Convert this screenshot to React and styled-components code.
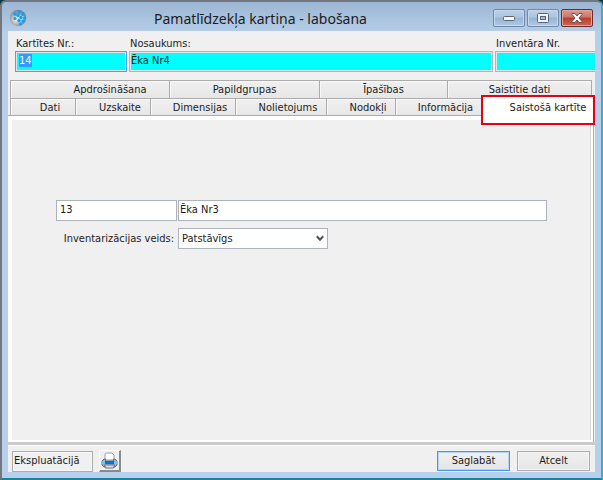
import React, { useEffect, useRef } from "react";
import styled, { createGlobalStyle } from "styled-components";

const GlobalStyle = createGlobalStyle`
  * { box-sizing: border-box; }
  body { margin: 0; background: #06363c; }
  body, input, select, button {
    font-family: "DejaVu Sans Condensed", "Noto Sans", sans-serif;
    font-size: 11px;
    line-height: 14px;
    color: #1c1c1c;
  }
`;

const Window = styled.div`
  display: flex;
  flex-direction: column;
  min-height: 100vh;
  padding: 0 6px 6px;
  background: linear-gradient(#9cb6d3, #b7cfea 32px, #b7cfea);
  border: 2px solid #737880;
  border-bottom-color: #15849c;
  border-right-color: #46a9c8;
  border-radius: 6px 6px 0 0;
`;

const TitleBar = styled.header`
  display: grid;
  grid-template-columns: 22px 1fr 104px;
  align-items: center;
  height: 29px;
  flex: none;
`;

const AppIcon = styled.svg`
  width: 18px;
  height: 18px;
  margin: 3px 0 0 1px;
`;

const Title = styled.h1`
  margin: 5px 0 0;
  font-family: "Noto Sans", sans-serif;
  font-size: 14px;
  line-height: 20px;
  font-weight: 400;
  text-align: center;
  white-space: nowrap;
`;

const WindowControls = styled.div`
  display: flex;
  gap: 2px;
  justify-content: flex-end;
  padding: 3px 2px 0 0;
`;

const ControlButton = styled.button`
  display: grid;
  place-items: center;
  width: 32px;
  height: 18px;
  padding: 0;
  border: 1px solid ${(p) => (p.$close ? "#70282c" : "#7189a6")};
  border-radius: 2px;
  background: ${(p) =>
    p.$close
      ? "linear-gradient(#dc9a8e, #cd7465 45%, #b93c28 50%, #c96b55)"
      : "linear-gradient(#bdd0e6, #adc5df 45%, #96b3d3 50%, #b0cae6)"};
  box-shadow: inset 0 0 0 1px ${(p) => (p.$close ? "#e2a79c" : "#c3d8ee")};
`;

const Client = styled.main`
  display: flex;
  flex-direction: column;
  flex: 1;
  overflow: hidden;
  background: #f0f0f0;
`;

const RecordHeader = styled.section`
  display: grid;
  grid-template-columns: 112px 1fr 100px;
  gap: 2px;
  padding: 6px 0 0 7px;
`;

const Field = styled.div`
  display: flex;
  flex-direction: column;
  label { padding-left: 1px; white-space: nowrap; }
`;

const TextInput = styled.input`
  width: 100%;
  min-width: 0;
  height: 21px;
  padding: 0 1px 2px;
  border: 1px solid #aeb3bb;
  outline: 0;
  background: #fff;
  border-radius: 0;
`;

const KeyInput = styled(TextInput)`
  background: #00ffff;
  border-color: ${(p) => (p.$active ? "#569de5" : "#b4b4b4")};
  box-shadow: inset 0 0 0 1px #e4e4e4;
  ${(p) => p.$active && "padding-left: 3px;"}
  ${(p) => p.$clipped && "border-right: 0; box-shadow: inset 1px 1px 0 #e4e4e4, inset 0 -1px 0 #e4e4e4;"}
  &::selection { background: #3399ff; color: #fff; }
`;

const Tabs = styled.nav`
  display: flex;
  flex-direction: column;
  margin: 8px 3px 0 2px;
`;

const TabRow = styled.div`
  display: grid;
  grid-template-columns: ${(p) => p.$columns};
  height: 18px;
`;

const Tab = styled.button`
  min-width: 0;
  height: 18px;
  padding: 1px 0 0 ${(p) => p.$indent || 0}px;
  border: 0;
  border-top: 1px solid #acacac;
  border-left: 1px solid #acacac;
  background: linear-gradient(#f0f0f0, #e6e6e6);
  box-shadow: inset 1px 1px 0 #f8f8f8;
  white-space: nowrap;
  &:last-child { border-right: 1px solid #acacac; }
`;

const ActiveTab = styled(Tab)`
  position: relative;
  z-index: 1;
  height: 30px;
  margin: -3px -3px 0 0;
  padding: 0 0 5px 20px;
  background: #fff;
  box-shadow: none;
  &, &:last-child { border: 2px solid #e60012; }
`;

const Panel = styled.section`
  flex: 1;
  margin-right: 2px;
  padding: 80px 44px 20px 44px;
  border: solid #fff;
  border-width: 4px 2px 2px 4px;
  box-shadow: inset -1px 0 0 #d5d5d5, 0 -1px 0 #acacac, 1px 0 0 #acacac;
`;

const LinkedRecord = styled.div`
  display: grid;
  grid-template-columns: 121px 1fr;
  gap: 1px;
  input { padding-left: 3px; padding-bottom: 2px; }
  input + input { padding-left: 1px; }
`;

const KindRow = styled.div`
  display: grid;
  grid-template-columns: 118px 150px;
  gap: 4px;
  align-items: center;
  margin-top: 7px;
  label { text-align: right; white-space: nowrap; }
`;

const SelectBox = styled.div`
  display: grid;
  align-items: center;
  > * { grid-area: 1 / 1; }
`;

const Select = styled.select`
  appearance: none;
  width: 100%;
  height: 21px;
  padding: 0 18px 0 3px;
  border: 1px solid #aeb3bb;
  border-radius: 0;
  background: #fff;
`;

const Chevron = styled.svg`
  justify-self: end;
  width: 8px;
  height: 7px;
  margin-right: 4px;
  pointer-events: none;
`;

const Footer = styled.footer`
  display: flex;
  align-items: center;
  gap: 6px;
  padding: 5px 5px 0 4px;
  border-top: 3px solid #cbcbcb;
  box-shadow: inset 0 1px 0 #fff;
`;

const Status = styled.output`
  width: 81px;
  height: 21px;
  padding: 2px 1px;
  border: 1px solid #acacac;
  box-shadow: inset 0 0 0 1px #f8f8f8;
`;

const PrintButton = styled.button`
  display: grid;
  place-items: center;
  width: 22px;
  height: 22px;
  padding: 0;
  border: solid;
  border-width: 1px 2px 2px 1px;
  border-color: #fff #8a8a8a #8a8a8a #fff;
  background: #f0f0f0;
`;

const Actions = styled.div`
  display: flex;
  gap: 7px;
  margin-left: auto;
`;

const ActionButton = styled.button`
  width: 73px;
  height: 20px;
  padding: 0;
  border: 1px solid ${(p) => (p.$primary ? "#3f99f2" : "#acacac")};
  background: linear-gradient(#f0f0f0, #e5e5e5);
  box-shadow: inset 0 0 0 1px ${(p) => (p.$primary ? "#b5d5f5" : "#f4f4f4")};
`;

const topTabs = [
  { name: "Apdrošināšana", indent: 40 },
  { name: "Papildgrupas" },
  { name: "Īpašības" },
  { name: "Saistītie dati" },
];
const bottomTabs = ["Dati", "Uzskaite", "Dimensijas", "Nolietojums", "Nodokļi", "Informācija"];

export default function App() {
  const numberRef = useRef(null);
  useEffect(() => {
    numberRef.current.focus();
    numberRef.current.select();
  }, []);

  return (
    <>
      <GlobalStyle />
      <Window>
        <TitleBar>
          <AppIcon viewBox="0 0 18 18" aria-hidden="true">
            <defs>
              <radialGradient id="ball" cx="38%" cy="60%" r="65%">
                <stop offset="0" stopColor="#f4f5f6" />
                <stop offset="0.5" stopColor="#a4a9af" />
                <stop offset="1" stopColor="#75808b" />
              </radialGradient>
            </defs>
            <circle cx="9" cy="9" r="8.3" fill="url(#ball)" />
            <path d="M7 7l3-1 3 1 3 1-1 3-2 2-3-1-3-2z" fill="#dff1fc" />
            <g fill="#149df2">
              <circle cx="6" cy="5" r="1.7" />
              <circle cx="10" cy="3" r="1.7" />
              <circle cx="14" cy="5" r="1.7" />
              <circle cx="9" cy="6.5" r="1.7" />
              <circle cx="6" cy="9.500" r="1.6" />
              <circle cx="12" cy="8.500" r="1.7" />
              <circle cx="15.500" cy="9" r="1.6" />
              <circle cx="10" cy="11.500" r="1.7" />
              <circle cx="14" cy="12" r="1.7" />
              <circle cx="11.500" cy="15" r="1.5" />
            </g>
          </AppIcon>
          <Title>Pamatlīdzekļa kartiņa - labošana</Title>
          <WindowControls>
            <ControlButton type="button" aria-label="Minimizēt">
              <svg width="12" height="6" viewBox="0 0 12 6"><rect x="0.5" y="1.5" width="11" height="4" rx="1" fill="#f6f6f6" stroke="#5b6575" /></svg>
            </ControlButton>
            <ControlButton type="button" aria-label="Maksimizēt">
              <svg width="12" height="10" viewBox="0 0 12 10">
                <rect x="0.5" y="0.5" width="11" height="9" rx="1" fill="#f0f2f5" stroke="#5b6575" />
                <rect x="3.5" y="3.5" width="5" height="3" fill="#a8c0db" stroke="#5b6575" />
              </svg>
            </ControlButton>
            <ControlButton type="button" $close aria-label="Aizvērt">
              <svg width="12" height="10" viewBox="0 0 12 10">
                <path d="M1 .5h3L6 3 8 .5h3v1L8 5l3 3.5v1H8L6 7 4 9.5H1v-1L4 5 1 1.5z" fill="#fafafa" stroke="#63505c" />
              </svg>
            </ControlButton>
          </WindowControls>
        </TitleBar>
        <Client>
          <RecordHeader>
            <Field>
              <label htmlFor="number">Kartītes Nr.:</label>
              <KeyInput id="number" ref={numberRef} $active defaultValue="14" />
            </Field>
            <Field>
              <label htmlFor="name">Nosaukums:</label>
              <KeyInput id="name" defaultValue="Ēka Nr4" />
            </Field>
            <Field>
              <label htmlFor="inventory">Inventāra Nr.</label>
              <KeyInput id="inventory" $clipped />
            </Field>
          </RecordHeader>
          <Tabs>
            <TabRow $columns="159fr 150fr 128fr 145fr">
              {topTabs.map((t) => (
                <Tab key={t.name} type="button" $indent={t.indent}>{t.name}</Tab>
              ))}
            </TabRow>
            <TabRow $columns="65fr 75fr 85fr 91fr 69fr 86fr 111fr">
              {bottomTabs.map((t) => (
                <Tab key={t} type="button" $indent={14}>{t}</Tab>
              ))}
              <ActiveTab type="button" aria-current="page">Saistošā kartīte</ActiveTab>
            </TabRow>
          </Tabs>
          <Panel>
            <LinkedRecord>
              <TextInput aria-label="Saistošās kartītes Nr." defaultValue="13" />
              <TextInput aria-label="Saistošās kartītes nosaukums" defaultValue="Ēka Nr3" />
            </LinkedRecord>
            <KindRow>
              <label htmlFor="kind">Inventarizācijas veids:</label>
              <SelectBox>
                <Select id="kind"><option>Patstāvīgs</option></Select>
                <Chevron viewBox="0 0 8 7" aria-hidden="true">
                  <path d="M.8 1.3L4 4.7l3.2-3.4" fill="none" stroke="#505050" strokeWidth="2" />
                </Chevron>
              </SelectBox>
            </KindRow>
          </Panel>
          <Footer>
            <Status>Ekspluatācijā</Status>
            <PrintButton type="button" aria-label="Drukāt">
              <svg width="17" height="17" viewBox="0 0 17 17">
                <path d="M4 8V2.500Q4 1 5.500 1H11l2 2v5z" fill="#fafcff" stroke="#9aa2ae" />
                <path d="M3 7h1.500v2h8V7H14l2 2v4l-2 2H3l-2-2V9z" fill="#9fb0c4" stroke="#66717f" />
                <path d="M1 9h3v3H1zM13 9h3v3h-3z" fill="#63c8fb" />
                <path d="M4 9h9v3H4z" fill="#0f6fd6" />
                <path d="M3.500 13h10l-1 3h-8z" fill="#dce1e7" stroke="#66717f" />
              </svg>
            </PrintButton>
            <Actions>
              <ActionButton type="button" $primary>Saglabāt</ActionButton>
              <ActionButton type="button">Atcelt</ActionButton>
            </Actions>
          </Footer>
        </Client>
      </Window>
    </>
  );
}
